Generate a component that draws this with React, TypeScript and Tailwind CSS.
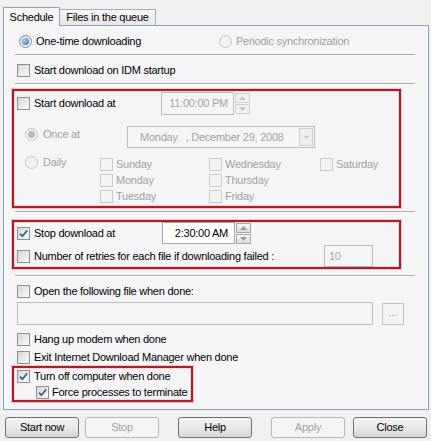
import React from 'react';

const Check = ({ checked = false, disabled = false }: { checked?: boolean; disabled?: boolean }) => (
  <span
    className={`relative inline-block w-[13px] h-[13px] shrink-0 border ${
      disabled ? 'border-[#cbcbcb] bg-[#f3f3f3]' : 'border-[#8e8f8f] bg-gradient-to-br from-[#d6d6d6] to-[#fbfbfb]'
    }`}
  >
    {checked && (
      <svg viewBox="0 0 11 11" className="absolute inset-0 w-[11px] h-[11px]">
        <path d="M2 5.6 L4.4 8.2 L9.2 2.4" fill="none" stroke="#3f5f99" strokeWidth="1.7" />
      </svg>
    )}
  </span>
);

const Radio = ({ checked = false, disabled = false }: { checked?: boolean; disabled?: boolean }) => (
  <span
    className={`inline-flex items-center justify-center w-[13px] h-[13px] shrink-0 rounded-full border ${
      disabled ? 'border-[#c6c6c6] bg-[#f1f1f1]' : 'border-[#8e8f8f] bg-gradient-to-br from-[#d6d6d6] to-[#fbfbfb]'
    }`}
  >
    {checked && (
      <span
        className={`w-[7px] h-[7px] rounded-full ${
          disabled ? 'bg-[#b8b8b8]' : 'bg-[radial-gradient(circle_at_35%_35%,#b4dcff,#1d5cb6)]'
        }`}
      />
    )}
  </span>
);

const Spin = ({ disabled = false }: { disabled?: boolean }) => {
  const c = disabled ? '#c4c4c4' : '#9a9a9a';
  const b = disabled ? 'border-[#cfcfcf] bg-[#f1f1f1]' : 'border-[#a8a8a8] bg-gradient-to-b from-[#f6f6f6] to-[#dcdcdc]';
  return (
    <div className="flex flex-col w-[15px] h-[21px] gap-px ml-px">
      <span className={`flex-1 border ${b} flex items-center justify-center`}>
        <svg width="7" height="4" viewBox="0 0 7 4"><path d="M0 4 L3.5 0 L7 4Z" fill={c} /></svg>
      </span>
      <span className={`flex-1 border ${b} flex items-center justify-center`}>
        <svg width="7" height="4" viewBox="0 0 7 4"><path d="M0 0 L3.5 4 L7 0Z" fill={c} /></svg>
      </span>
    </div>
  );
};

const Sep = ({ mt }: { mt: string }) => (
  <div className={`${mt} ml-[11px] w-[400px] h-[2px] border-t border-[#a9a9a9] border-b border-b-white`} />
);

const Btn = ({ label, disabled = false, ml }: { label: string; disabled?: boolean; ml: string }) => (
  <div
    className={`${ml} w-[74px] h-[21px] rounded-[3px] border flex items-center justify-center ${
      disabled
        ? 'border-[#b4b8bb] bg-[#f4f4f4] text-[#a3a3a3]'
        : 'border-[#707070] bg-gradient-to-b from-[#f4f4f4] via-[#e9e9e9] to-[#d6d6d6] text-black'
    }`}
  >
    {label}
  </div>
);

const red = 'border-2 border-[#a3212f] shadow-[0_0_0_1px_#f2c2c4,inset_0_0_0_1px_#f5d2d4]';

export default function App() {
  return (
    <div className="w-[431px] h-[441px] bg-[#f0f0f0] pt-[7px] pl-[3px] font-['Liberation_Sans',Arial,sans-serif] text-[11px] tracking-[-0.25px] text-black overflow-hidden">
      {/* tabs */}
      <div className="flex items-end h-[18px]">
        <div className="relative z-10 -mb-px w-[57px] h-[19px] border border-b-0 border-[#8ea3ba] bg-[#f5f5f7] flex items-center justify-center">
          Schedule
        </div>
        <div className="w-[96px] h-[16px] border border-l-0 border-b-0 border-[#9fb0c2] bg-gradient-to-b from-[#f7f7f7] to-[#e6e6e6] flex items-center justify-center">
          Files in the queue
        </div>
      </div>

      {/* panel */}
      <div className="w-[426px] h-[385px] border border-[#8ea3ba] bg-[#f5f5f7] flex flex-col">
        <div className="mt-[7px] h-[16px] flex items-center">
          <div className="ml-[15px] flex items-center gap-[4px] w-[200px]">
            <Radio checked />
            <span>One-time downloading</span>
          </div>
          <div className="flex items-center gap-[4px] text-[#a0a0a0]">
            <Radio disabled />
            <span>Periodic synchronization</span>
          </div>
        </div>
        <Sep mt="mt-[5px]" />

        <div className="mt-[6px] h-[16px] flex items-center ml-[13px] gap-[4px]">
          <Check />
          <span>Start download on IDM startup</span>
        </div>
        <Sep mt="mt-[5px]" />

        {/* start download at */}
        <div className={`mt-[4px] ml-[8px] w-[389px] h-[119px] ${red} flex flex-col`}>
          <div className="mt-px h-[23px] flex items-center">
            <div className="ml-[3px] flex items-center gap-[4px] w-[144px]">
              <Check />
              <span>Start download at</span>
            </div>
            <div className="w-[73px] h-[23px] border border-[#bcbcbc] flex items-center justify-end pr-[5px] text-[#a3a3a3]">
              11:00:00 PM
            </div>
            <Spin disabled />
          </div>

          <div className="mt-[11px] h-[22px] flex items-center">
            <div className="ml-[11px] flex items-center gap-[5px] w-[102px] text-[#a0a0a0] -mt-[5px]">
              <Radio checked disabled />
              <span>Once at</span>
            </div>
            <div className="w-[188px] h-[22px] border border-[#bcbcbc] flex items-center text-[#a3a3a3]">
              <span className="ml-[12px]">Monday</span>
              <span className="ml-[8px] whitespace-pre">, December 29, 2008</span>
              <span className="ml-auto mr-px w-[14px] h-[18px] border border-[#cfcfcf] bg-[#eeeeee] flex items-center justify-center">
                <svg width="5" height="3" viewBox="0 0 5 3"><path d="M0 0 L2.5 3 L5 0Z" fill="#c0c0c0" /></svg>
              </span>
            </div>
          </div>

          <div className="mt-[8px] flex text-[#a0a0a0]">
            <div className="ml-[11px] w-[75px] h-[16px] flex items-center gap-[5px] -mt-[2px]">
              <Radio disabled />
              <span>Daily</span>
            </div>
            <div className="grid grid-cols-[109px_111px_60px]">
              {['Sunday', 'Wednesday', 'Saturday', 'Monday', 'Thursday', '', 'Tuesday', 'Friday', ''].map((d, i) => (
                <div key={i} className="h-[16px] flex items-center gap-[3px]">
                  {d && <Check disabled />}
                  {d && <span>{d}</span>}
                </div>
              ))}
            </div>
          </div>
        </div>
        <Sep mt="mt-[3px]" />

        {/* stop download at */}
        <div className={`mt-[7px] ml-[8px] w-[389px] h-[49px] ${red} flex flex-col`}>
          <div className="h-[22px] flex items-center">
            <div className="ml-[3px] flex items-center gap-[4px] w-[145px]">
              <Check checked />
              <span>Stop download at</span>
            </div>
            <div className="w-[73px] h-[22px] border border-[#a5a5a5] bg-white flex items-center justify-end pr-[6px]">
              2:30:00 AM
            </div>
            <Spin />
          </div>
          <div className="mt-px h-[22px] flex items-center">
            <div className="ml-[3px] flex items-center gap-[4px] w-[307px]">
              <Check />
              <span>Number of retries for each file if downloading failed :</span>
            </div>
            <div className="w-[49px] h-[22px] border border-[#bcbcbc] flex items-center pl-[4px] text-[#a3a3a3]">10</div>
          </div>
        </div>
        <Sep mt="mt-[6px]" />

        <div className="mt-[6px] h-[16px] flex items-center ml-[13px] gap-[4px]">
          <Check />
          <span>Open the following file when done:</span>
        </div>
        <div className="mt-[3px] h-[23px] flex items-center">
          <div className="ml-[13px] w-[356px] h-[23px] border border-[#bcbcbc]" />
          <div className="ml-[9px] w-[22px] h-[22px] border border-[#c2c2c2] bg-[#f3f3f3] flex items-center justify-center text-[#a8a8a8] pb-[3px]">
            ...
          </div>
        </div>

        <div className="mt-[6px] h-[16px] flex items-center ml-[13px] gap-[4px]">
          <Check />
          <span>Hang up modem when done</span>
        </div>
        <div className="mt-[2px] h-[16px] flex items-center ml-[13px] gap-[4px]">
          <Check />
          <span>Exit Internet Download Manager when done</span>
        </div>

        {/* turn off */}
        <div className={`mt-[1px] ml-[8px] w-[181px] h-[36px] ${red} flex flex-col`}>
          <div className="h-[16px] flex items-center ml-[3px] gap-[4px]">
            <Check checked />
            <span>Turn off computer when done</span>
          </div>
          <div className="h-[16px] flex items-center ml-[22px] gap-[3px]">
            <Check checked />
            <span>Force processes to terminate</span>
          </div>
        </div>
      </div>

      {/* buttons */}
      <div className="mt-[7px] flex">
        <Btn label="Start now" ml="ml-[2px]" />
        <Btn label="Stop" disabled ml="ml-[6px]" />
        <Btn label="Help" ml="ml-[19px]" />
        <Btn label="Apply" disabled ml="ml-[19px]" />
        <Btn label="Close" ml="ml-[8px]" />
      </div>
    </div>
  );
}
